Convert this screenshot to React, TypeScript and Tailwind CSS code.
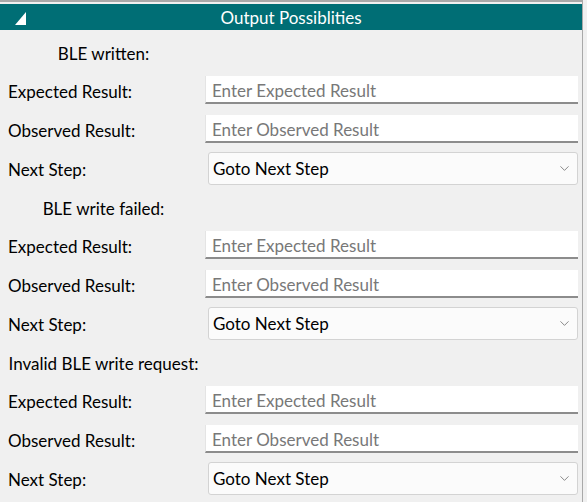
import { ChevronDown } from 'lucide-react'

const sections = ['BLE written:', 'BLE write failed:', 'Invalid BLE write request:']

function Field({ label, placeholder }: { label: string; placeholder: string }) {
  return (
    <div className="flex items-center h-[28px]">
      <div className="w-[205px] pl-2 pt-[3px] text-[17px] text-black">{label}</div>
      <input
        type="text"
        placeholder={placeholder}
        className="w-[373px] h-[28px] bg-white border-l border-l-[#e4e4e4] border-b-2 border-b-[#8c8c8c] px-[6px] pt-[2px] text-[17px] text-black placeholder:text-[#787878] outline-none"
      />
    </div>
  )
}

function Section({ title }: { title: string }) {
  return (
    <div className="flex flex-col">
      <div className="h-[46px] w-[207px] pt-[2px] flex items-center justify-center text-[17px] text-black">{title}</div>
      <Field label="Expected Result:" placeholder="Enter Expected Result" />
      <div className="h-[11px]" />
      <Field label="Observed Result:" placeholder="Enter Observed Result" />
      <div className="h-[9px]" />
      <div className="flex items-center h-[33px]">
        <div className="w-[208px] pl-2 pt-[2px] text-[17px] text-black">Next Step:</div>
        <div className="w-[370px] h-[33px] flex items-center justify-between bg-[#fbfbfb] border border-[#d3d3d3] rounded-[3px] pl-[4px] pr-[5px]">
          <span className="text-[17px] pt-[1px] text-black">Goto Next Step</span>
          <ChevronDown size={15} strokeWidth={1.1} className="text-[#555]" />
        </div>
      </div>
    </div>
  )
}

export default function App() {
  return (
    <div className="w-[587px] h-[502px] bg-[#f0f0f0] overflow-hidden" style={{ fontFamily: 'Lato, "Noto Sans", sans-serif' }}>
      <div className="w-[583px] h-[502px] border-t-2 border-r border-[#a9a9a9] pt-[2px]">
        <div className="h-[26px] w-[582px] bg-[#006e75] flex items-center relative">
          <svg width="12" height="13" viewBox="0 0 12 13" className="absolute left-[15px] top-[8px]">
            <polygon points="11,0 11,13 0,13" fill="white" />
          </svg>
          <div className="flex-1 pt-[2px] text-center text-white text-[17px]">Output Possiblities</div>
        </div>
        {sections.map((s) => (
          <Section key={s} title={s} />
        ))}
      </div>
    </div>
  )
}
